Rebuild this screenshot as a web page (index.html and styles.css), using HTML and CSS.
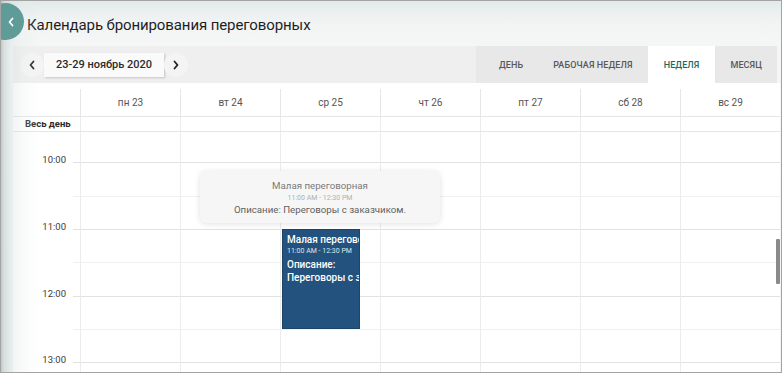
FILE: index.html
```html
<!DOCTYPE html>
<html lang="ru">
<head>
<meta charset="utf-8">
<title>Календарь бронирования переговорных</title>
<link rel="stylesheet" href="styles.css">
</head>
<body>
<div class="frame">
  <button class="back" aria-label="Назад">
    <svg width="8" height="10" viewBox="0 0 8 10"><path d="M5.5 1.5 L2.5 5 L5.5 8.5" fill="none" stroke="#fff" stroke-width="1.8" stroke-linecap="round" stroke-linejoin="round"/></svg>
  </button>
  <header class="top">
    <h1 class="title">Календарь бронирования переговорных</h1>
  </header>
  <div class="toolbar">
    <div class="nav">
      <button class="arrow" aria-label="Предыдущая неделя">
        <svg width="8" height="10" viewBox="0 0 8 10"><path d="M5.5 1.5 L2.5 5 L5.5 8.5" fill="none" stroke="#222" stroke-width="1.8" stroke-linecap="round" stroke-linejoin="round"/></svg>
      </button>
      <button class="range">23-29 ноябрь 2020</button>
      <button class="arrow" aria-label="Следующая неделя">
        <svg width="8" height="10" viewBox="0 0 8 10"><path d="M2.5 1.5 L5.5 5 L2.5 8.5" fill="none" stroke="#222" stroke-width="1.8" stroke-linecap="round" stroke-linejoin="round"/></svg>
      </button>
    </div>
    <div class="views">
      <button class="view">День</button>
      <button class="view">Рабочая неделя</button>
      <button class="view active">Неделя</button>
      <button class="view">Месяц</button>
    </div>
  </div>
  <div class="calendar">
    <div class="row head">
      <div class="gut"></div><div class="gut2"></div>
      <div class="day">пн 23</div>
      <div class="day">вт 24</div>
      <div class="day">ср 25</div>
      <div class="day">чт 26</div>
      <div class="day">пт 27</div>
      <div class="day">сб 28</div>
      <div class="day">вс 29</div>
    </div>
    <div class="row allday">
      <div class="allday-label">Весь день</div>
      <div class="c"></div><div class="c"></div><div class="c"></div><div class="c"></div><div class="c"></div><div class="c"></div><div class="c"></div>
    </div>
    <div class="row slot lead">
      <div class="time"></div><div class="tick"></div>
      <div class="c"></div><div class="c"></div><div class="c"></div><div class="c"></div><div class="c"></div><div class="c"></div><div class="c"></div>
    </div>
    <div class="row slot hour tall">
      <div class="time"><span>10:00</span></div><div class="tick"></div>
      <div class="c"></div><div class="c"></div><div class="c"></div><div class="c"></div><div class="c"></div><div class="c"></div><div class="c"></div>
    </div>
    <div class="row slot half">
      <div class="time"></div><div class="tick"></div>
      <div class="c"></div><div class="c"></div><div class="c"></div><div class="c"></div><div class="c"></div><div class="c"></div><div class="c"></div>
    </div>
    <div class="row slot hour">
      <div class="time"><span>11:00</span></div><div class="tick"></div>
      <div class="c"></div><div class="c"></div>
      <div class="c has-event">
        <div class="event">
          <div class="ev-title">Малая переговорная</div>
          <div class="ev-time">11:00 AM - 12:30 PM</div>
          <div class="ev-desc">Описание:</div>
          <div class="ev-desc">Переговоры с заказчиком.</div>
        </div>
      </div>
      <div class="c"></div><div class="c"></div><div class="c"></div><div class="c"></div>
    </div>
    <div class="row slot half tall">
      <div class="time"></div><div class="tick"></div>
      <div class="c"></div><div class="c"></div><div class="c"></div><div class="c"></div><div class="c"></div><div class="c"></div><div class="c"></div>
    </div>
    <div class="row slot hour">
      <div class="time"><span>12:00</span></div><div class="tick"></div>
      <div class="c"></div><div class="c"></div><div class="c"></div><div class="c"></div><div class="c"></div><div class="c"></div><div class="c"></div>
    </div>
    <div class="row slot half">
      <div class="time"></div><div class="tick"></div>
      <div class="c"></div><div class="c"></div><div class="c"></div><div class="c"></div><div class="c"></div><div class="c"></div><div class="c"></div>
    </div>
    <div class="row slot hour tall">
      <div class="time"><span>13:00</span></div><div class="tick"></div>
      <div class="c"></div><div class="c"></div><div class="c"></div><div class="c"></div><div class="c"></div><div class="c"></div><div class="c"></div>
    </div>
  </div>
  <div class="tooltip">
    <div class="tt-title">Малая переговорная</div>
    <div class="tt-time">11:00 AM - 12:30 PM</div>
    <div class="tt-desc">Описание: Переговоры с заказчиком.</div>
  </div>
  <div class="scroll-thumb"></div>
</div>
</body>
</html>
```
FILE: styles.css
```css
* { box-sizing: border-box; }
html, body { margin: 0; padding: 0; background: #fff; }
body { font-family: Roboto, "Noto Sans", Arial, sans-serif; color: #333; }
button { font-family: inherit; border: 0; background: none; padding: 0; margin: 0; cursor: pointer; }

.frame {
  position: relative;
  width: 782px;
  height: 373px;
  border: 1px solid #a4a4a4;
  overflow: hidden;
  display: flex;
  flex-direction: column;
  background: linear-gradient(to bottom, #e3eaea 0, #f2f4f4 22px, #f5f6f6 46px, #f2f4f4 100%);
}
.frame::before {
  content: "";
  position: absolute;
  left: 0; top: 0; bottom: 0;
  width: 40px;
  background: linear-gradient(to right, rgba(150,165,165,.55) 0, rgba(175,190,190,.4) 3px, rgba(205,218,218,.3) 10px, rgba(225,234,234,.2) 22px, rgba(255,255,255,0) 40px);
  pointer-events: none;
  z-index: 3;
}

.back {
  position: absolute;
  left: -14px;
  top: 2px;
  width: 37px;
  height: 37px;
  border-radius: 50%;
  background: #5f9b97;
  display: flex;
  align-items: center;
  justify-content: flex-end;
  padding-right: 9px;
  z-index: 4;
}

.top { height: 45px; padding: 14px 0 0 26px; }
.title {
  margin: 0;
  font-size: 15px;
  line-height: 20px;
  font-weight: 400;
  color: #1f1f1f;
  letter-spacing: -0.1px;
}

.toolbar {
  height: 37px;
  margin: 0 4px 0 12px;
  background: #efefef;
  display: flex;
  justify-content: space-between;
}
.nav { display: flex; align-items: center; padding-left: 7px; }
.arrow {
  width: 24px; height: 24px;
  border-radius: 50%;
  background: #f4f4f4;
  display: flex; align-items: center; justify-content: center;
}
.range {
  width: 120px; height: 24px;
  background: #fafafa;
  box-shadow: 1px 1px 2px rgba(0,0,0,.18);
  font-size: 11px;
  font-weight: 500;
  color: #2b2b2b;
}
.views { display: flex; background: #e8e8e8; padding-left: 8px; }
.view {
  padding: 0 15px;
  font-size: 9px;
  font-weight: 500;
  text-transform: uppercase;
  color: #585858;
  letter-spacing: 0.1px;
}
.view.active { background: #fff; color: #1c6b63; padding: 0 16px; }

.calendar {
  flex: 1;
  margin: 0 1px 0 12px;
  background: #fff;
  overflow: hidden;
}
.row {
  display: grid;
  grid-template-columns: 60px 7px repeat(7, 1fr);
}
.head { height: 34px; border-bottom: 1px solid #e6e6e6; padding-top: 6px; }
.day {
  border-left: 1px solid #e6e6e6;
  display: flex; align-items: center; justify-content: center;
  font-size: 10px;
  color: #555;
}
.allday { height: 15px; border-bottom: 1px solid #e6e6e6; }
.allday-label {
  grid-column: 1 / 3;
  font-size: 9.5px;
  font-weight: 700;
  color: #2a2a2a;
  line-height: 14px;
  padding-left: 12px;
  white-space: nowrap;
}
.allday .c { border-left: 1px solid #ececec; }

.slot { height: 33px; }
.slot.tall { height: 34px; }
.slot.lead { height: 30px; }
.slot .c { border-left: 1px solid #ececec; }
.hour .tick, .hour .c { border-top: 1px solid #e2e2e2; }
.half .tick, .half .c { border-top: 1px solid #f0f0f0; }
.time { text-align: right; padding-right: 7px; }
.time span {
  display: block;
  margin-top: -8px;
  font-size: 9.5px;
  line-height: 12px;
  color: #3c3c3c;
}

.has-event { position: relative; }
.event {
  position: absolute;
  left: 1px; top: -1px;
  width: 78px; height: 100px;
  background: #24527e;
  border: 1px solid #1d4569;
  color: #fff;
  padding: 3px 0 0 4px;
  overflow: hidden;
  z-index: 2;
}
.ev-title { font-size: 10px; font-weight: 500; line-height: 13px; white-space: nowrap; }
.ev-time { font-size: 7px; line-height: 10px; color: #dfe6ee; white-space: nowrap; margin-bottom: 2px; }
.ev-desc { font-size: 10px; font-weight: 500; line-height: 13px; white-space: nowrap; }

.tooltip {
  position: absolute;
  left: 199px; top: 170px;
  width: 240px; height: 52px;
  background: #f6f6f6;
  border-radius: 6px;
  box-shadow: 0 1px 6px rgba(0,0,0,.12);
  text-align: center;
  padding-top: 9px;
  z-index: 5;
}
.tt-title { font-size: 9.7px; line-height: 12px; color: #7a7a7a; }
.tt-time { font-size: 7px; line-height: 12px; color: #b0b0b0; }
.tt-desc { font-size: 9.7px; line-height: 12px; color: #5f5f5f; }

.scroll-thumb {
  position: absolute;
  left: 775px; top: 238px;
  width: 4px; height: 45px;
  background: #8a8a8a;
  border-radius: 1px;
  z-index: 5;
}
```
